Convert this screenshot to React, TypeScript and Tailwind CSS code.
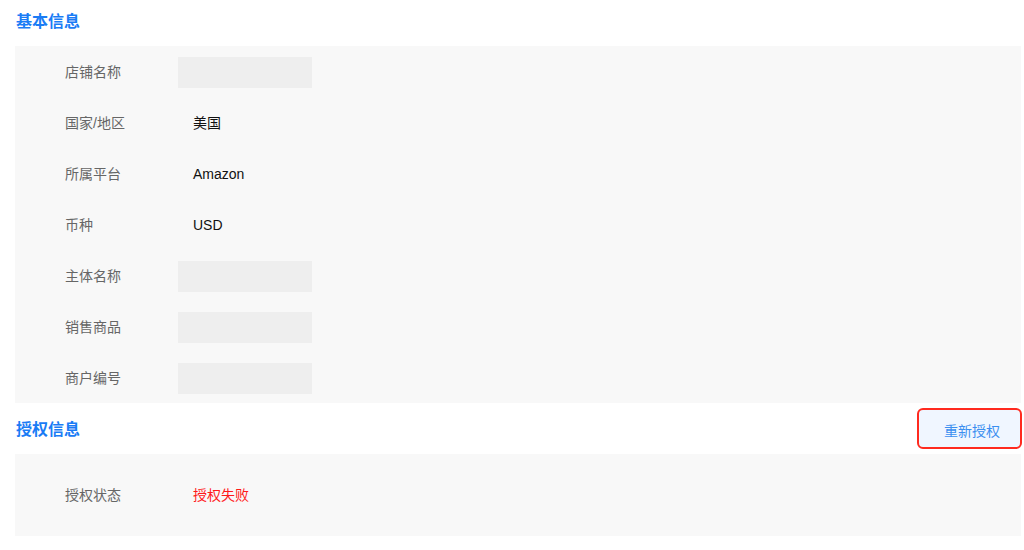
import React from 'react';

type Row = { label: string; value?: string; blank?: boolean; danger?: boolean };

const basicRows: Row[] = [
  { label: '店铺名称', blank: true },
  { label: '国家/地区', value: '美国' },
  { label: '所属平台', value: 'Amazon' },
  { label: '币种', value: 'USD' },
  { label: '主体名称', blank: true },
  { label: '销售商品', blank: true },
  { label: '商户编号', blank: true },
];

const InfoRow: React.FC<{ row: Row; className?: string }> = ({ row, className = '' }) => (
  <div className={`flex items-center pt-px ${className}`}>
    <div className="w-[163px] pl-[50px] text-[14px] text-[#666]">{row.label}</div>
    {row.blank ? (
      <div className="w-[134px] h-[31px] bg-[#eeeeee]" />
    ) : (
      <div className={`pl-[15px] text-[14px] ${row.danger ? 'text-[#ff1a1a]' : 'text-[#111]'}`}>{row.value}</div>
    )}
  </div>
);

export default function App() {
  return (
    <div
      className="w-[1024px] h-[550px] bg-white pl-[15px] pr-[3px] overflow-hidden"
      style={{ fontFamily: '"Liberation Sans", "Noto Sans CJK SC", sans-serif' }}
    >
      {/* 基本信息 */}
      <div className="h-[46px] flex items-center pb-[3px]">
        <h2 className="pl-px text-[16px] font-bold text-[#1a7cf5]">基本信息</h2>
      </div>
      <div className="bg-[#f8f8f8]">
        {basicRows.map((row) => (
          <InfoRow key={row.label} row={row} className="h-[51px]" />
        ))}
      </div>

      {/* 授权信息 */}
      <div className="h-[51px] flex items-center justify-between">
        <h2 className="pl-px pt-[2px] text-[16px] font-bold text-[#1a7cf5]">授权信息</h2>
        <button className="-mr-px w-[105px] h-[41px] pl-[5px] pt-[5px] rounded-[6px] border-2 border-[#ff2a1f] bg-[#f0f6ff] text-[14px] text-[#3b8ff0]">
          重新授权
        </button>
      </div>
      <div className="bg-[#f8f8f8]">
        <InfoRow row={{ label: '授权状态', value: '授权失败', danger: true }} className="h-[82px]" />
      </div>
    </div>
  );
}
